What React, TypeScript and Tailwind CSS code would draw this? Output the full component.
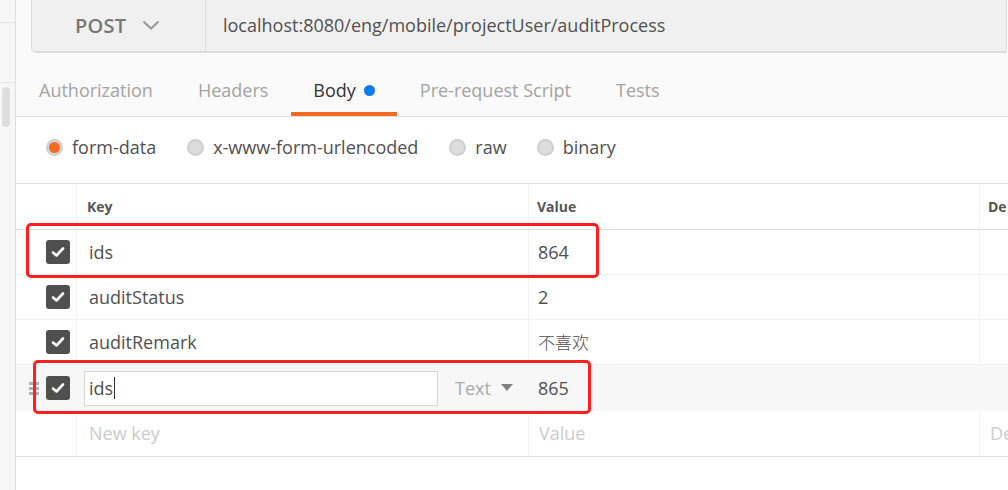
import React from "react";

const font = { fontFamily: '"Open Sans", "Noto Sans CJK SC", sans-serif' };

function Check() {
  return (
    <div className="w-[24px] h-[24px] shrink-0 rounded-[3px] bg-[#4f4f4f] flex items-center justify-center">
      <svg width="14" height="12" viewBox="0 0 14 12">
        <path d="M2 6.5 L5.5 9.5 L12 2.5" fill="none" stroke="#fff" strokeWidth="2.6" strokeLinecap="round" strokeLinejoin="round" />
      </svg>
    </div>
  );
}

function Radio({ on }: { on?: boolean }) {
  return (
    <div className="w-[17px] h-[17px] shrink-0 rounded-full bg-[#dcdcdc] border-2 border-[#cfcfcf] flex items-center justify-center">
      {on && <div className="w-[11px] h-[11px] rounded-full bg-[#f26b21]" />}
    </div>
  );
}

function Row({ k, v, cjk }: { k: string; v: string; cjk?: boolean }) {
  return (
    <div className="flex h-[45px] border-b border-[#f2f2f2]">
      <div className="w-[61px] shrink-0 flex items-center pl-[30px] border-r border-[#f2f2f2]">
        <Check />
      </div>
      <div className="w-[452px] shrink-0 flex items-center pl-[12px] border-r border-[#f2f2f2] text-[18px] text-[#505050]">
        {k}
      </div>
      <div
        className="w-[451px] shrink-0 flex items-center pl-[9px] border-r border-[#f2f2f2] text-[18px] text-[#505050]"
        style={cjk ? { fontFamily: '"Noto Sans CJK SC", sans-serif', fontWeight: 300, fontSize: "17px" } : undefined}
      >
        {v}
      </div>
      <div className="flex-1" />
    </div>
  );
}

export default function App() {
  return (
    <div className="w-[1008px] h-[490px] relative overflow-hidden bg-white flex" style={font}>
      {/* left strip */}
      <div className="w-[16px] h-full bg-[#f7f7f7] border-r border-[#dedede] flex flex-col shrink-0">
        <div className="h-[23px] border-b border-[#e3e3e3]" />
        <div className="h-[60px] border-b border-[#e3e3e3]" />
        <div className="ml-[2px] mt-[4px] w-[8px] h-[40px] rounded-full bg-[#dedede]" />
      </div>

      {/* main */}
      <div className="flex-1 flex flex-col min-w-0">
        <div className="bg-[#fafafa] border-b border-[#dddddd]">
          {/* URL bar */}
          <div className="ml-[15px] mr-[1px] h-[53px] flex bg-[#f0f0f0] border border-t-0 border-b-2 border-[#dcdcdc] rounded-bl-[5px]">
            <div className="w-[174px] shrink-0 border-r border-[#dcdcdc] flex items-center pl-[43px]">
              <span className="text-[20px] font-semibold text-[#777777] tracking-[0.2px]">POST</span>
              <svg className="ml-[16px]" width="18" height="11" viewBox="0 0 18 11">
                <path d="M1.5 1.5 L9 8.5 L16.5 1.5" fill="none" stroke="#9a9a9a" strokeWidth="2.2" />
              </svg>
            </div>
            <div className="flex items-center pl-[17px] text-[18px] text-[#505050]">
              localhost:8080/eng/mobile/projectUser/auditProcess
            </div>
          </div>
          {/* tabs */}
          <div className="h-[63px] flex text-[18px] pl-[0.5px]">
            <div className="px-[22.5px] pt-[12px] flex items-center text-[#a3a3a3]">Authorization</div>
            <div className="px-[22.5px] pt-[12px] flex items-center text-[#a3a3a3]">Headers</div>
            <div className="px-[22.5px] pt-[12px] flex items-center text-[#333333] relative">
              Body
              <span className="ml-[8px] w-[11px] h-[11px] rounded-full bg-[#0d7bf0] inline-block" />
              <div className="absolute left-0 right-0 bottom-0 h-[4px] bg-[#f26b21]" />
            </div>
            <div className="px-[22.5px] pt-[12px] flex items-center text-[#a3a3a3]">Pre-request Script</div>
            <div className="px-[22.5px] pt-[12px] flex items-center text-[#a3a3a3]">Tests</div>
          </div>
        </div>

        {/* radios */}
        <div className="h-[66px] flex items-center pl-[30px] pb-[6px] text-[18px] text-[#505050]">
          <Radio on />
          <span className="ml-[9px]">form-data</span>
          <div className="ml-[31px]"><Radio /></div>
          <span className="ml-[9px]">x-www-form-urlencoded</span>
          <div className="ml-[31px]"><Radio /></div>
          <span className="ml-[9px]">raw</span>
          <div className="ml-[30px]"><Radio /></div>
          <span className="ml-[9px]">binary</span>
        </div>

        {/* table */}
        <div className="border-t border-[#dddddd] border-b">
          <div className="flex h-[46px] border-b border-[#dddddd] text-[14px] font-bold text-[#555555]">
            <div className="w-[61px] shrink-0 border-r border-[#f2f2f2]" />
            <div className="w-[452px] shrink-0 flex items-center pl-[10px] border-r border-[#f2f2f2]">Key</div>
            <div className="w-[451px] shrink-0 flex items-center pl-[8px] border-r border-[#f2f2f2]">Value</div>
            <div className="flex-1 flex items-center pl-[8px]">De</div>
          </div>
          <Row k="ids" v="864" />
          <Row k="auditStatus" v="2" />
          <Row k="auditRemark" v="不喜欢" cjk />
          {/* editing row */}
          <div className="flex h-[46px] bg-[#f7f7f7]">
            <div className="w-[61px] shrink-0 flex items-center">
              <div className="ml-[13px] flex flex-col gap-[2px]">
                <div className="w-[10px] h-[3px] bg-[#b0b0b0]" />
                <div className="w-[10px] h-[3px] bg-[#b0b0b0]" />
                <div className="w-[10px] h-[3px] bg-[#b0b0b0]" />
              </div>
              <div className="ml-[7px]"><Check /></div>
            </div>
            <div className="w-[452px] shrink-0 flex items-center">
              <div className="ml-[7px] w-[354px] shrink-0 h-[35px] bg-white border border-[#d6d6d6] flex items-center pl-[4px] text-[18px] text-[#505050]">
                ids<span className="inline-block w-[1px] h-[22px] bg-[#333] ml-[1px]" />
              </div>
              <span className="ml-[17px] text-[18px] text-[#aaaaaa]">Text</span>
              <svg className="ml-[10px]" width="12" height="8" viewBox="0 0 12 8">
                <path d="M0 0 L12 0 L6 7 Z" fill="#808080" />
              </svg>
            </div>
            <div className="w-[451px] shrink-0 flex items-center pl-[9px] text-[18px] text-[#505050]">865</div>
            <div className="flex-1" />
          </div>
          <div className="flex h-[45px] text-[18px] text-[#cccccc]">
            <div className="w-[61px] shrink-0 border-r border-[#f2f2f2]" />
            <div className="w-[452px] shrink-0 flex items-center pl-[12px] border-r border-[#f2f2f2]">New key</div>
            <div className="w-[451px] shrink-0 flex items-center pl-[10px] border-r border-[#f2f2f2]">Value</div>
            <div className="flex-1 flex items-center pl-[10px]">De</div>
          </div>
        </div>
      </div>

      {/* red annotation boxes */}
      <div className="absolute left-[26px] top-[223px] w-[573px] h-[55px] border-[3px] border-[#ff1f1f] rounded-[5px] pointer-events-none" />
      <div className="absolute left-[33px] top-[360px] w-[558px] h-[54px] border-[3px] border-[#ff1f1f] rounded-[5px] pointer-events-none" />
    </div>
  );
}
